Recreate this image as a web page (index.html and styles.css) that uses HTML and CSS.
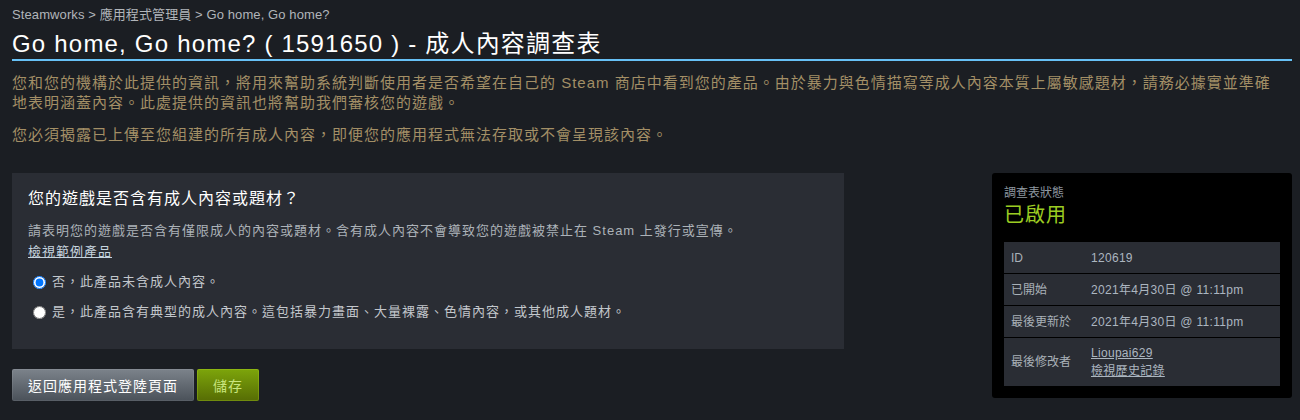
FILE: index.html
```html
<!DOCTYPE html>
<html lang="zh-Hant">
<head>
<meta charset="utf-8">
<title>成人內容調查表</title>
<link rel="stylesheet" href="styles.css">
</head>
<body>
<div class="page">
  <div class="breadcrumb"><a href="#">Steamworks</a> &gt; <a href="#">應用程式管理員</a> &gt; <a href="#">Go home, Go home?</a></div>
  <h1 class="title">Go home, Go home? ( 1591650 ) - 成人內容調查表</h1>
  <p class="desc">您和您的機構於此提供的資訊，將用來幫助系統判斷使用者是否希望在自己的 Steam 商店中看到您的產品。由於暴力與色情描寫等成人內容本質上屬敏感題材，請務必據實並準確地表明涵蓋內容。此處提供的資訊也將幫助我們審核您的遊戲。</p>
  <p class="desc">您必須揭露已上傳至您組建的所有成人內容，即便您的應用程式無法存取或不會呈現該內容。</p>

  <div class="main">
    <div class="left">
      <div class="panel">
        <h2 class="q">您的遊戲是否含有成人內容或題材？</h2>
        <p class="sub">請表明您的遊戲是否含有僅限成人的內容或題材。含有成人內容不會導致您的遊戲被禁止在 Steam 上發行或宣傳。</p>
        <a class="example" href="#">檢視範例產品</a>
        <div class="options">
          <label class="opt"><input type="radio" name="adult" checked>否，此產品未含成人內容。</label>
          <label class="opt"><input type="radio" name="adult">是，此產品含有典型的成人內容。這包括暴力畫面、大量裸露、色情內容，或其他成人題材。</label>
        </div>
      </div>
      <div class="actions">
        <button class="btn grey" type="button">返回應用程式登陸頁面</button>
        <button class="btn green" type="button">儲存</button>
      </div>
    </div>

    <aside class="status">
      <div class="status-label">調查表狀態</div>
      <div class="status-value">已啟用</div>
      <div class="info">
        <div class="row"><span class="k">ID</span><span class="v">120619</span></div>
        <div class="row"><span class="k">已開始</span><span class="v">2021年4月30日 @ 11:11pm</span></div>
        <div class="row"><span class="k">最後更新於</span><span class="v">2021年4月30日 @ 11:11pm</span></div>
        <div class="row tall"><span class="k">最後修改者</span><span class="v"><a href="#">Lioupai629</a><a href="#">檢視歷史記錄</a></span></div>
      </div>
    </aside>
  </div>
</div>
</body>
</html>
```

FILE: styles.css
```css
html, body {
  margin: 0;
  background: #1b1e23;
}
body {
  font-family: "Liberation Sans", Arial, "Noto Sans CJK TC", sans-serif;
  color: #acb2b8;
}
.page {
  width: 1280px;
  padding: 6px 8px 0 12px;
}
.breadcrumb {
  font-size: 13px;
  line-height: 18px;
  color: #b1b5ba;
  letter-spacing: 0.1px;
}
.breadcrumb a {
  color: inherit;
  text-decoration: none;
}
.title {
  margin: 5px 0 0;
  font-size: 24px;
  line-height: 30px;
  font-weight: normal;
  color: #ffffff;
  letter-spacing: 1.2px;
  border-bottom: 2px solid #67c1f5;
}
.desc {
  margin: 12px 0 0;
  max-width: 1262px;
  font-size: 15px;
  line-height: 20px;
  letter-spacing: 1px;
  color: #a38f66;
}
.main {
  display: flex;
  justify-content: space-between;
  margin-top: 28px;
}
.left {
  width: 832px;
}
.panel {
  background: #2a2d34;
  padding: 15px 16px 27px;
}
.q {
  margin: 0;
  font-size: 16px;
  line-height: 22px;
  font-weight: normal;
  color: #ffffff;
  letter-spacing: 1px;
}
.sub {
  margin: 11px 0 0;
  font-size: 13px;
  line-height: 20px;
  letter-spacing: 1px;
  color: #acb2b8;
}
.example {
  display: block;
  width: fit-content;
  font-size: 13px;
  line-height: 21px;
  letter-spacing: 1px;
  color: #c6d4df;
  text-decoration: underline;
}
.options {
  margin-top: 10px;
  display: flex;
  flex-direction: column;
  gap: 10px;
}
.opt {
  display: flex;
  align-items: center;
  font-size: 13px;
  line-height: 20px;
  letter-spacing: 1px;
  color: #c3c7cc;
}
.opt input {
  margin: 0 6px 0 5px;
  width: 13px;
  height: 13px;
}
.actions {
  margin-top: 20px;
  display: flex;
  gap: 3px;
}
.btn {
  height: 32px;
  padding: 0 16px;
  border: 0;
  border-radius: 2px;
  font-family: inherit;
  font-size: 14px;
  letter-spacing: 1px;
  cursor: pointer;
}
.btn.grey {
  background: linear-gradient(to bottom, #7c838b 0%, #4a5159 100%);
  box-shadow: inset 0 0 0 1px rgba(255, 255, 255, 0.08);
  color: #ffffff;
}
.btn.green {
  background: linear-gradient(to bottom, #7da50b 0%, #566c04 100%);
  box-shadow: inset 0 0 0 1px rgba(190, 230, 40, 0.25);
  color: #c9e57f;
}
.status {
  width: 300px;
  box-sizing: border-box;
  background: #000000;
  border-radius: 3px;
  padding: 12px;
  align-self: flex-start;
}
.status-label {
  font-size: 12px;
  line-height: 16px;
  color: #8f98a0;
}
.status-value {
  margin-top: 2px;
  font-size: 20px;
  line-height: 24px;
  color: #9ccc22;
  letter-spacing: 1px;
}
.info {
  margin-top: 15px;
  display: flex;
  flex-direction: column;
  gap: 1px;
  font-size: 12px;
  line-height: 18px;
}
.row {
  display: flex;
  align-items: center;
  height: 31px;
  background: #2a2d34;
}
.row.tall {
  height: 48px;
}
.k {
  width: 80px;
  box-sizing: border-box;
  padding-left: 7px;
  color: #a9b1b8;
  white-space: nowrap;
}
.v {
  display: flex;
  flex-direction: column;
  align-items: flex-start;
  padding-left: 7px;
  color: #acb6c0;
  letter-spacing: 0.3px;
  white-space: nowrap;
}
.v a {
  color: #acb6c0;
  text-decoration: underline;
}
```
